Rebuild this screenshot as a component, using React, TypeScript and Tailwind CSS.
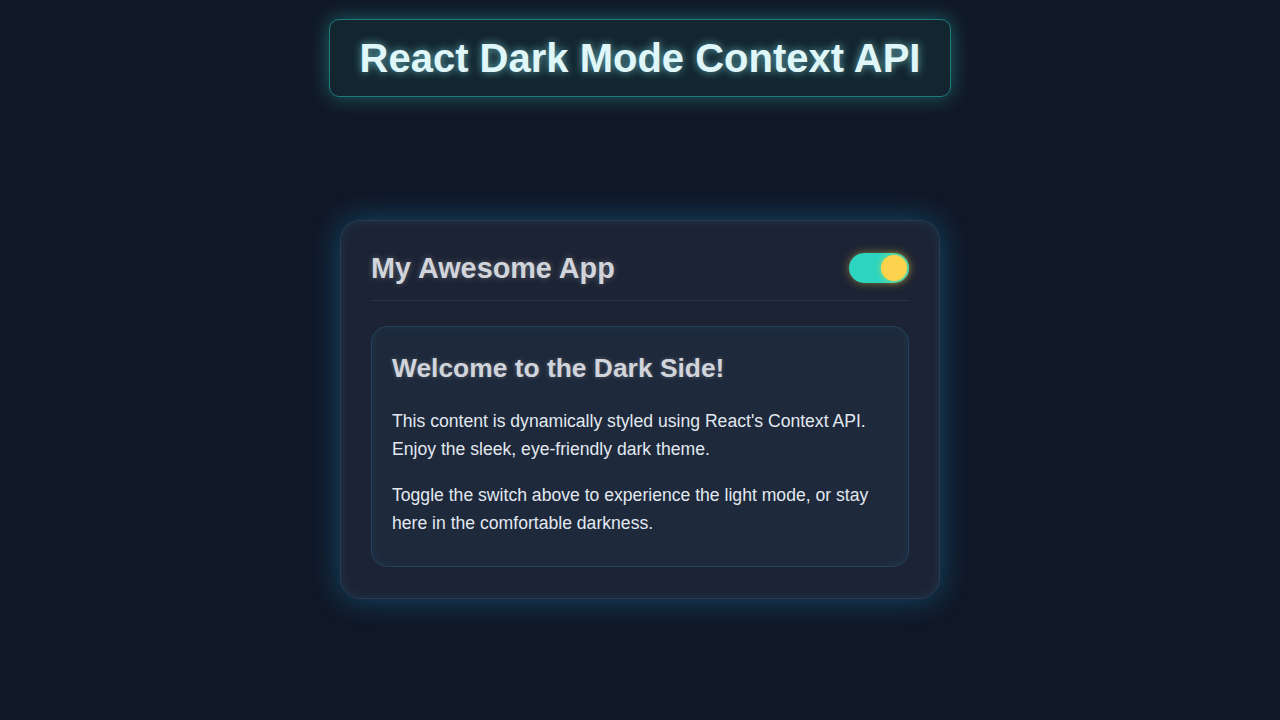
import React, { useState } from "react";

export default function App() {
  const [dark, setDark] = useState(true);
  return (
    <div
      className="min-h-screen w-full bg-[#111827] flex flex-col items-center pt-[19px]"
      style={{ fontFamily: '"Liberation Sans", Arial, sans-serif' }}
    >
      <h1 className="rounded-[10px] border border-[#1f7a7c] bg-[#13262f] px-[30px] py-[14px] text-[40px] font-bold leading-[48px] text-[#e0f7fa] shadow-[0_0_20px_rgba(45,212,191,0.4)] [text-shadow:0_0_8px_rgba(128,222,234,0.7)]">
        React Dark Mode Context API
      </h1>

      <div className="mt-[123px] w-[600px] rounded-[20px] border border-[#2b3a4f] bg-[#1c2334] px-[30px] pt-[30px] pb-[31px] shadow-[0_0_30px_rgba(14,165,233,0.35),inset_0_0_12px_rgba(56,189,248,0.12)]">
        <div className="flex items-center justify-between border-b border-[#2a3345] pb-[15px]">
          <h2 className="text-[28.8px] font-bold leading-[34px] text-[#d1d5db] [text-shadow:0_0_6px_rgba(209,213,219,0.35)]">
            My Awesome App
          </h2>
          <button
            onClick={() => setDark(!dark)}
            className="relative h-[30px] w-[60px] rounded-full bg-[#2dd4bf] shadow-[0_0_10px_rgba(253,224,71,0.45)]"
            aria-label="toggle"
          >
            <span className="absolute right-[2px] top-[2px] h-[26px] w-[26px] rounded-full bg-[#fcd34d] shadow-[0_0_6px_rgba(253,224,71,0.6)]" />
          </button>
        </div>

        <div className="mt-[25px] rounded-[16px] border border-[#23415a] bg-[#1e293b] px-[20px] pt-[26px] pb-[29px] shadow-[inset_0_0_10px_rgba(56,189,248,0.08)]">
          <h3 className="mb-[23px] text-[26.4px] font-bold leading-[31px] text-[#d1d5db] [text-shadow:0_0_4px_rgba(209,213,219,0.3)]">
            Welcome to the Dark Side!
          </h3>
          <p className="mb-[18px] text-[17.6px] leading-[28px] text-[#e2e8f0]">
            This content is dynamically styled using React's Context API. Enjoy the sleek, eye-friendly dark theme.
          </p>
          <p className="text-[17.6px] leading-[28px] text-[#e2e8f0]">
            Toggle the switch above to experience the light mode, or stay here in the comfortable darkness.
          </p>
        </div>
      </div>
    </div>
  );
}
